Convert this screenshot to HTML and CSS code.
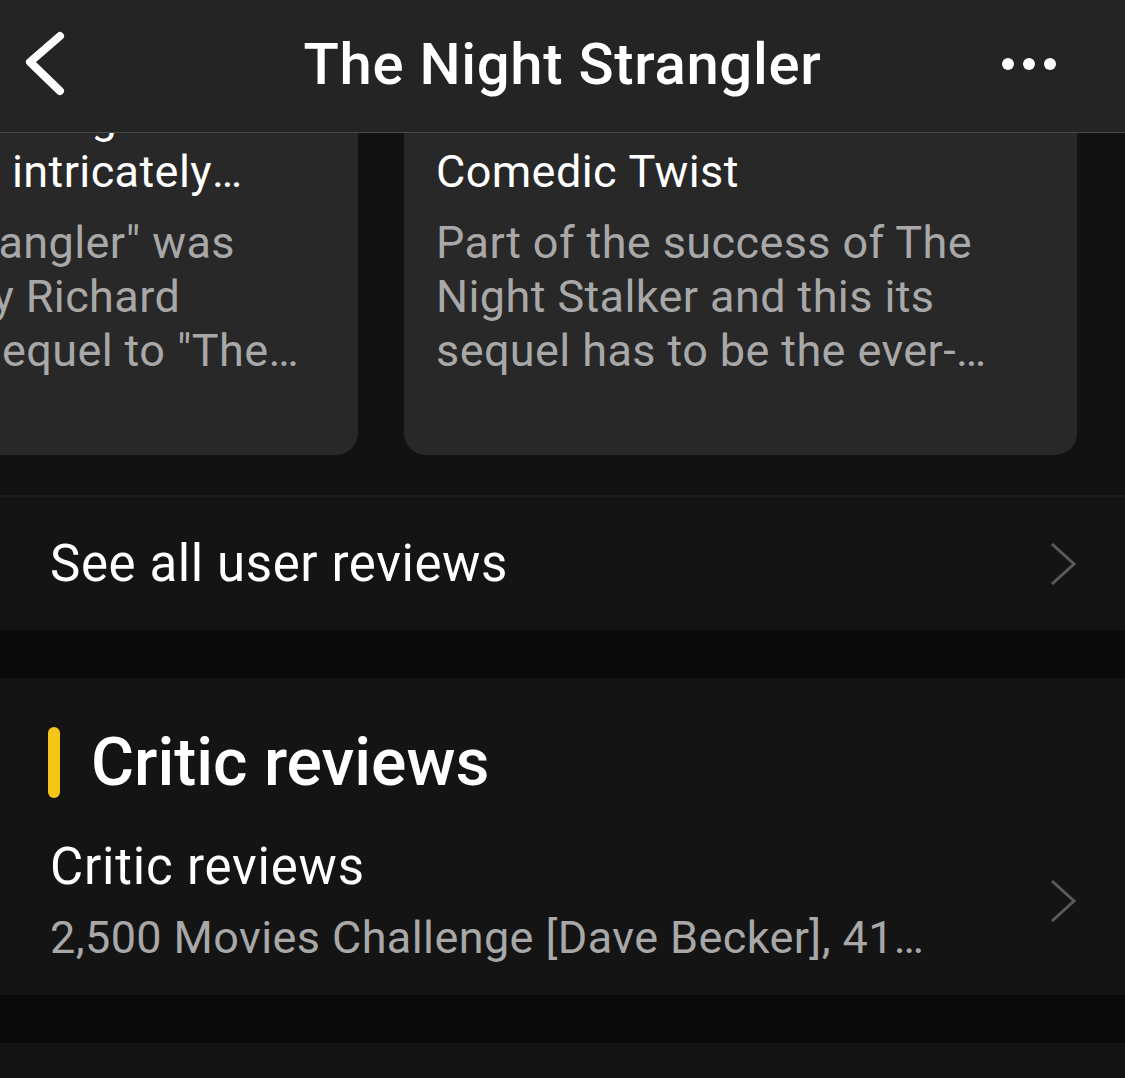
FILE: index.html
```html
<!DOCTYPE html>
<html lang="en">
<head>
<meta charset="utf-8">
<title>The Night Strangler</title>
<link rel="stylesheet" href="styles.css">
</head>
<body>
<header class="topbar">
  <button class="icon-btn back" aria-label="Back">
    <svg width="48" height="72" viewBox="0 0 48 72"><path d="M36 8 L6 34 L36 63" fill="none" stroke="#fff" stroke-width="8" stroke-linecap="round" stroke-linejoin="round"/></svg>
  </button>
  <h1 class="topbar-title">The Night Strangler</h1>
  <button class="icon-btn more" aria-label="More">
    <svg width="60" height="16" viewBox="0 0 60 16"><circle cx="8" cy="8" r="6" fill="#fff"/><circle cx="29" cy="8" r="6" fill="#fff"/><circle cx="50" cy="8" r="6" fill="#fff"/></svg>
  </button>
</header>

<main class="page">
  <section class="user-reviews">
    <div class="carousel">
      <div class="carousel-track">
        <article class="review-card">
          <h3 class="review-title">A Sequel to The Night Stalker which is more intricately woven</h3>
          <p class="review-body">"The Night Strangler" was also written by Richard Matheson, a sequel to "The Night Stalker", and it works well.</p>
        </article>
        <article class="review-card">
          <h3 class="review-title">Grand Horror With a Comedic&nbsp;Twist</h3>
          <p class="review-body">Part of the success of The Night Stalker and this its sequel has to be the ever-present humor of Darren McGavin.</p>
        </article>
      </div>
    </div>
    <a class="row-link see-all">
      <span class="row-text">See all user reviews</span>
      <svg class="chev" width="30" height="46" viewBox="0 0 30 46"><path d="M3 3 L25 23 L3 43" fill="none" stroke="#5a5a5a" stroke-width="3"/></svg>
    </a>
  </section>

  <section class="critic">
    <h2 class="section-heading"><span class="accent"></span>Critic reviews</h2>
    <a class="row-link critic-row">
      <div class="critic-text">
        <span class="critic-title">Critic reviews</span>
        <span class="critic-sub">2,500 Movies Challenge [Dave Becker], 41 Critics and more</span>
      </div>
      <svg class="chev" width="30" height="46" viewBox="0 0 30 46"><path d="M3 3 L25 23 L3 43" fill="none" stroke="#5a5a5a" stroke-width="3"/></svg>
    </a>
  </section>

  <section class="next-section"></section>
</main>
</body>
</html>
```

FILE: styles.css
```css
* { box-sizing: border-box; }
html, body { margin: 0; padding: 0; }
body {
  background: #0a0a0a;
  color: #fff;
  font-family: Roboto, "Noto Sans", "Liberation Sans", sans-serif;
  height: 1078px;
  overflow: hidden;
}

.topbar {
  position: fixed;
  top: 0; left: 0; right: 0;
  height: 133px;
  background: #242424;
  border-bottom: 1px solid #4a4a4a;
  display: grid;
  grid-template-columns: 1fr auto 1fr;
  align-items: center;
  padding: 0 24px;
  z-index: 10;
}
.icon-btn {
  background: none;
  border: 0;
  padding: 0;
  display: flex;
  align-items: center;
}
.back { justify-self: start; margin-top: -4px; }
.more { justify-self: end; margin: -4px 41px 0 0; }
.topbar-title {
  margin: -4px 0 0;
  font-size: 58px;
  font-weight: 500;
  letter-spacing: 0.7px;
}

.page { display: flex; flex-direction: column; gap: 48px; }

.user-reviews { background: #121212; }
.carousel { overflow: hidden; padding: 59px 0 40px; }
.carousel-track {
  display: flex;
  gap: 46px;
  margin-left: -315px;
}
.review-card {
  flex: 0 0 673px;
  height: 396px;
  background: #282828;
  border-radius: 22px;
  padding: 32px 32px;
}
.review-title {
  margin: 0 0 17px;
  font-size: 45px;
  font-weight: 400;
  line-height: 54px;
  letter-spacing: 0.4px;
  color: #fff;
  display: -webkit-box;
  -webkit-line-clamp: 2;
  -webkit-box-orient: vertical;
  overflow: hidden;
}
.review-body {
  margin: 0;
  font-size: 45px;
  line-height: 54px;
  letter-spacing: 0.4px;
  color: #a8a8a8;
  display: -webkit-box;
  -webkit-line-clamp: 3;
  -webkit-box-orient: vertical;
  overflow: hidden;
}

.row-link {
  display: flex;
  align-items: center;
  justify-content: space-between;
  padding: 0 46px 0 50px;
  background: #141414;
}
.see-all {
  height: 135px;
  border-top: 2px solid #1c1c1c;
}
.row-text { font-size: 51px; letter-spacing: 0.6px; }

.critic { background: #141414; padding-top: 48px; }
.section-heading {
  margin: 0 0 0 48px;
  display: flex;
  align-items: center;
  gap: 31px;
  font-size: 66px;
  font-weight: 500;
  height: 72px;
}
.accent {
  width: 12px;
  height: 71px;
  border-radius: 6px;
  background: #f5c518;
}
.critic-row { height: 197px; padding-top: 8px; }
.critic-text { display: flex; flex-direction: column; gap: 14px; min-width: 0; }
.critic-title { font-size: 51px; line-height: 60px; letter-spacing: 0.8px; }
.critic-sub {
  font-size: 45px;
  line-height: 54px;
  letter-spacing: 0.4px;
  color: #a8a8a8;
  white-space: nowrap;
  overflow: hidden;
  text-overflow: ellipsis;
  max-width: 885px;
}

.next-section { background: #141414; height: 200px; }
```
